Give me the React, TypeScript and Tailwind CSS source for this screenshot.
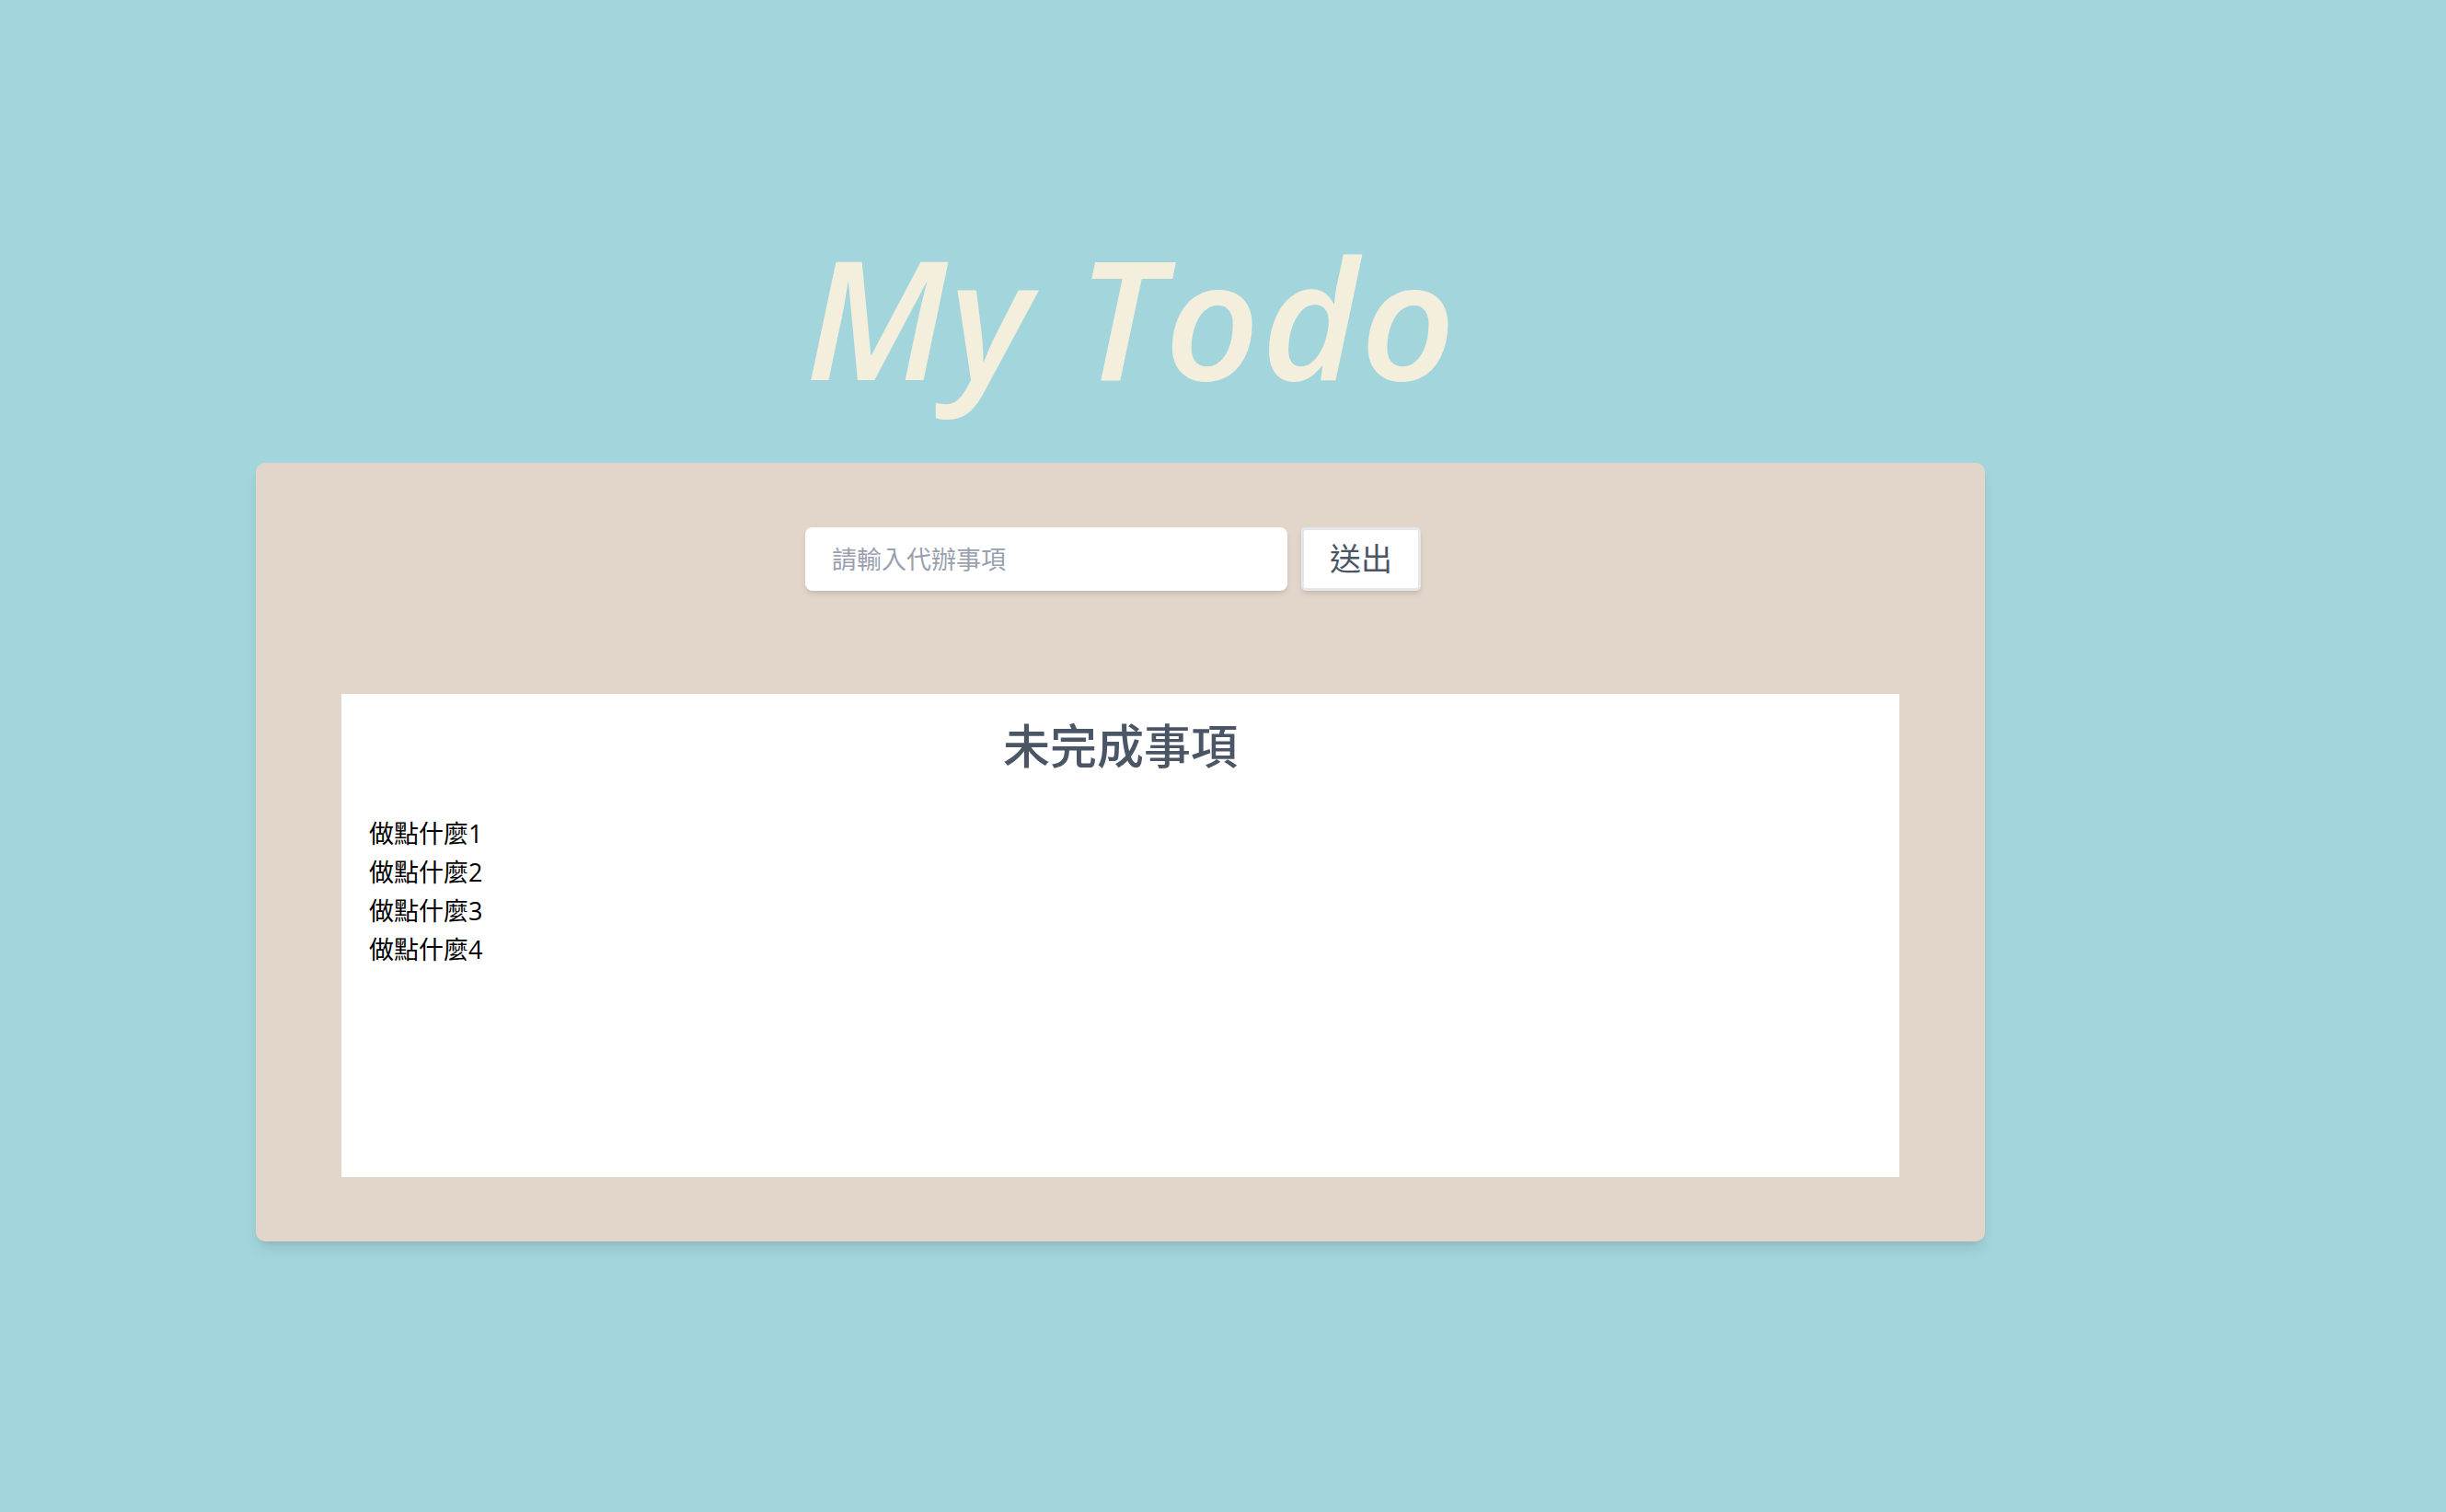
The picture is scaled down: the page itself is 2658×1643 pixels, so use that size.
import { useState } from 'react';

const todos = ['做點什麼1', '做點什麼2', '做點什麼3', '做點什麼4'];

export default function App() {
  const [text, setText] = useState('');

  return (
    <div className="min-h-screen bg-[#a3d5dc] pt-[254px] font-['Open_Sans','Noto_Sans_CJK_TC',sans-serif]">
      <div className="ml-[278px] w-[1879px]">
        <h1 className="pl-[24px] text-center text-[180px] leading-none tracking-[2px] italic font-semibold text-[#f3efdc]">My Todo</h1>

        {/* 主面板 */}
        <div className="mt-[69px] rounded-[10px] bg-[#e2d5ca] px-[93px] pt-[70px] pb-[70px] shadow-lg">
          <form className="flex justify-center gap-[15px] pr-[16px]" onSubmit={(e) => e.preventDefault()}>
            <input
              value={text}
              onChange={(e) => setText(e.target.value)}
              placeholder="請輸入代辦事項"
              className="h-[69px] w-[524px] rounded-[8px] bg-white px-[29px] text-[27px] text-gray-700 shadow-md outline-none placeholder:text-gray-400"
            />
            <button className="h-[69px] w-[130px] rounded-[5px] border-[3px] border-gray-200 bg-white text-[34px] text-gray-600 shadow-md">
              送出
            </button>
          </form>

          <div className="mt-[112px] h-[525px] bg-white px-[30px] pt-[18px]">
            <h2 className="text-center text-[51px] leading-[76px] font-medium text-gray-600">未完成事項</h2>
            <ul className="mt-[37px]">
              {todos.map((t) => (
                <li key={t} className="text-[27px] leading-[42px] text-black">
                  {t}
                </li>
              ))}
            </ul>
          </div>
        </div>
      </div>
    </div>
  );
}
